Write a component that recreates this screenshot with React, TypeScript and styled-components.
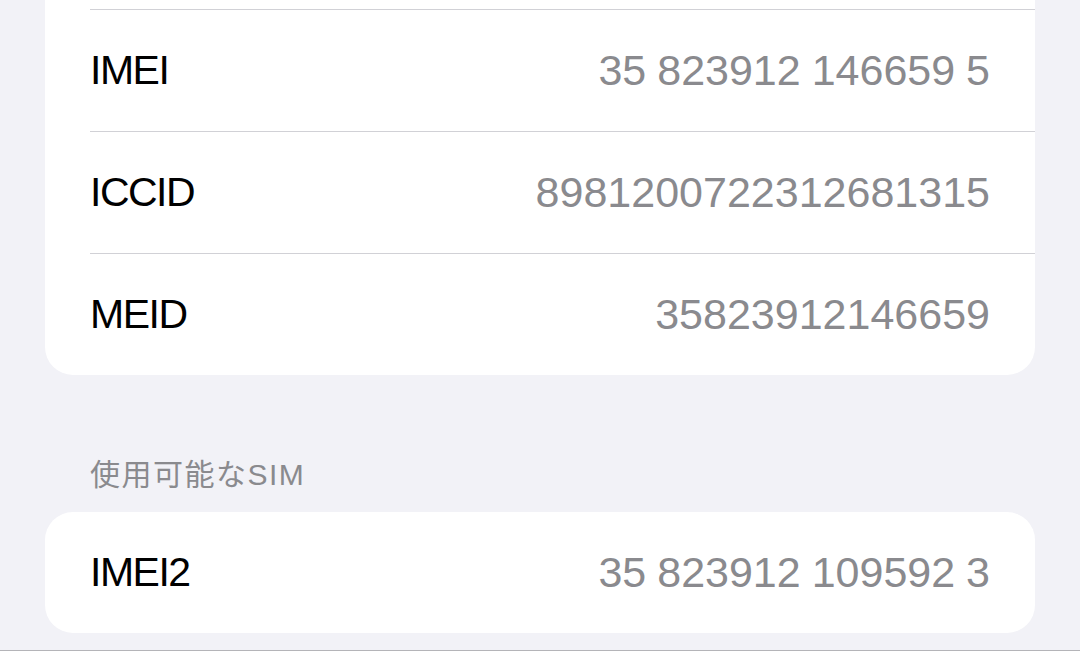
import React from "react";
import styled, { createGlobalStyle } from "styled-components";

const Global = createGlobalStyle`
  html, body { margin: 0; padding: 0; background: #f2f2f7; }
  body { font-family: "Liberation Sans", "Noto Sans CJK JP", sans-serif; overflow: hidden; }
`;

const Page = styled.div`
  width: 1080px;
  height: 651px;
  background: #f2f2f7;
  display: flex;
  flex-direction: column;
  padding: 0 45px;
  box-sizing: border-box;
  overflow: hidden;
`;

const Card = styled.div<{ $cutTop?: boolean }>`
  background: #ffffff;
  border-radius: ${(p) => (p.$cutTop ? "0 0 28px 28px" : "28px")};
  padding-top: ${(p) => (p.$cutTop ? "9px" : "0")};
  display: flex;
  flex-direction: column;
`;

const Row = styled.div<{ $divider?: boolean }>`
  height: 121px;
  margin-left: 45px;
  padding-right: 45px;
  border-top: ${(p) => (p.$divider ? "1px solid #d1d1d6" : "none")};
  display: flex;
  align-items: center;
  justify-content: space-between;
  font-size: 41px;
`;

const Label = styled.span`
  color: #000;
  letter-spacing: -1.5px;
`;

const Value = styled.span`
  color: #8a8a8e;
  font-size: 43px;
  word-spacing: -1px;
`;

const SectionHeader = styled.div`
  padding: 82px 0 19px 45px;
  font-size: 30px;
  line-height: 36px;
  letter-spacing: 1.5px;
  color: #8a8a8e;
  font-family: "Liberation Sans", "Noto Sans CJK JP", sans-serif;
`;

const Spacer = styled.div`
  height: 17px;
  flex-shrink: 0;
`;

const BottomLine = styled.div`
  margin: 0 -45px;
  border-top: 1px solid #b4b4b8;
  height: 10px;
`;

const rows = [
  { label: "IMEI", value: "35 823912 146659 5" },
  { label: "ICCID", value: "8981200722312681315" },
  { label: "MEID", value: "35823912146659" },
];

export default function App() {
  return (
    <>
      <Global />
      <Page>
        <Card $cutTop>
          {rows.map((r) => (
            <Row key={r.label} $divider>
              <Label>{r.label}</Label>
              <Value>{r.value}</Value>
            </Row>
          ))}
        </Card>
        <SectionHeader>使用可能なSIM</SectionHeader>
        <Card>
          <Row>
            <Label>IMEI2</Label>
            <Value>35 823912 109592 3</Value>
          </Row>
        </Card>
        <Spacer />
        <BottomLine />
      </Page>
    </>
  );
}
